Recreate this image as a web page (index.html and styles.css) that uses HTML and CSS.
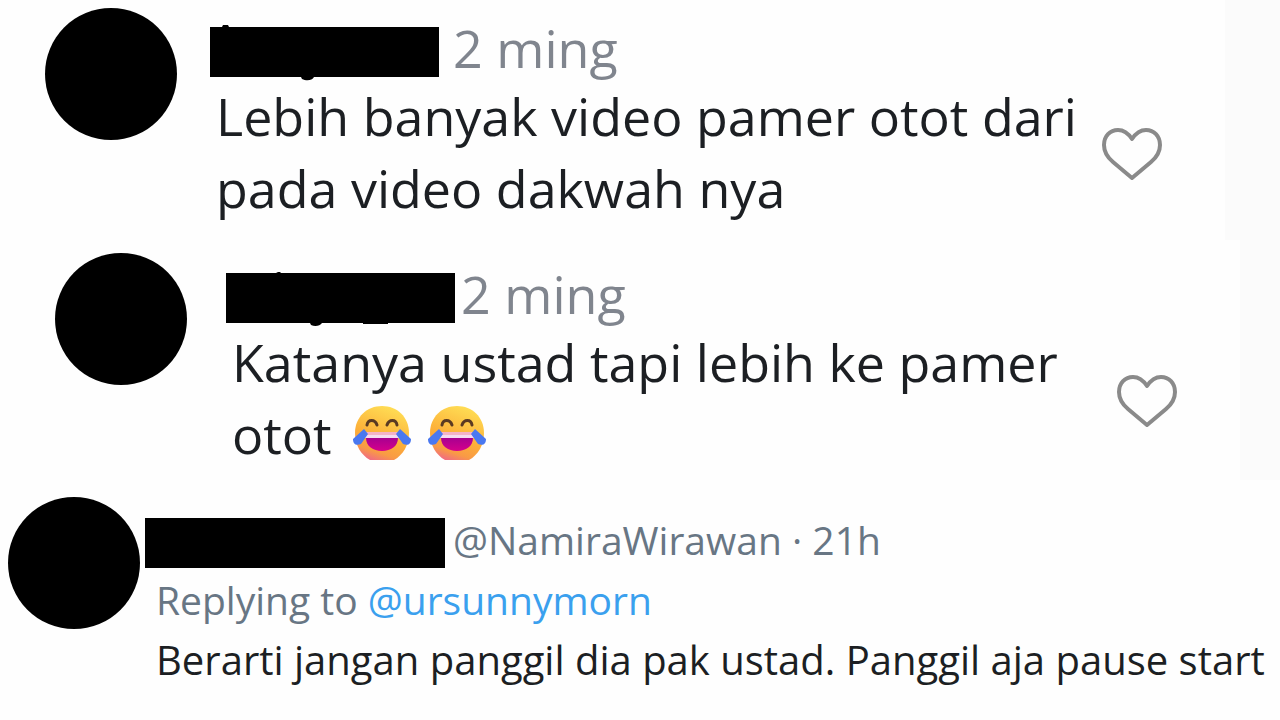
FILE: index.html
```
<!DOCTYPE html>
<html lang="id">
<head>
    <meta charset="UTF-8">
    <meta name="viewport" content="width=device-width, initial-scale=1.0">
    <title>Komentar</title>
    <link rel="stylesheet" href="styles.css">
</head>
<body>
    <!-- shared icons -->
    <svg class="sprite" aria-hidden="true">
        <defs>
            <linearGradient id="face" x1="0.7" y1="0" x2="0.35" y2="1">
                <stop offset="0" stop-color="#ffdf55"/>
                <stop offset="0.6" stop-color="#fcae38"/>
                <stop offset="0.85" stop-color="#f99a45"/>
                <stop offset="1" stop-color="#f2707c"/>
            </linearGradient>
            <linearGradient id="mouth" x1="0" y1="0" x2="0" y2="1">
                <stop offset="0" stop-color="#a80090"/>
                <stop offset="1" stop-color="#d5008c"/>
            </linearGradient>
            <symbol id="heart" viewBox="0 0 60 54">
                <path d="M30 12 C26 6 22 3 16 3 C8 3 2 9 2 18 C2 25 5 30 11 35 L30 51 L49 35 C55 30 58 25 58 18 C58 9 52 3 44 3 C38 3 34 6 30 12 Z" fill="none" stroke="#8a8a8a" stroke-width="4" stroke-linejoin="round"/>
            </symbol>
            <symbol id="joy" viewBox="0 0 58 54">
                <path d="M29 0 C14 0 2 11 2 27 C2 39 8 49 17 54 H41 C50 49 56 39 56 27 C56 11 44 0 29 0 Z" fill="url(#face)"/>
                <path d="M14 19 C15 13 22 13 24 19 M34 19 C36 13 43 13 44 19" fill="none" stroke="#5b3a22" stroke-width="3" stroke-linecap="round"/>
                <path d="M12 26 H46 V32 H12 Z" fill="#f3b3c8"/>
                <path d="M12 29 H46 V32 H12 Z" fill="#f6dcf2"/>
                <path d="M13 32 H45 C45 40 38 45 29 45 C20 45 13 40 13 32 Z" fill="url(#mouth)"/>
                <path d="M11 23 L15 28 L8 38 C3 40 0 38 0 33 Z M47 23 L43 28 L50 38 C55 40 58 38 58 33 Z" fill="#4a78f0"/>
            </symbol>
        </defs>
    </svg>

    <main class="feed">
        <article class="comment">
            <div class="avatar"></div>
            <div class="body">
                <div class="meta">
                    <svg class="name" viewBox="0 0 229 58" aria-hidden="true">
                        <path d="M0 4 H229 V54 H0 Z M12 4 L13 2 H18 L19 4 Z M91 54 H104 C102 58 96 58 92 56 Z"/>
                    </svg>
                    <span class="time">2 ming</span>
                </div>
                <p class="text">Lebih banyak video pamer otot dari<br>pada video dakwah nya</p>
            </div>
            <button class="like" type="button" aria-label="Suka"><svg><use href="#heart"/></svg></button>
            <div class="edge"></div>
        </article>

        <article class="comment comment-second">
            <div class="avatar"></div>
            <div class="body">
                <div class="meta">
                    <svg class="name" viewBox="0 0 229 58" aria-hidden="true">
                        <path d="M0 4 H229 V54 H0 Z M50 4 L52 3 H54 L55 4 Z M84 54 H96 C94 57 89 58 85 56 Z M137 54 H162 V55 H137 Z"/>
                    </svg>
                    <span class="time">2 ming</span>
                </div>
                <p class="text">Katanya ustad tapi lebih ke pamer<br>otot <span class="emojis"><svg role="img" aria-label="tertawa"><use href="#joy"/></svg><svg role="img" aria-label="tertawa"><use href="#joy"/></svg></span></p>
            </div>
            <button class="like" type="button" aria-label="Suka"><svg><use href="#heart"/></svg></button>
            <div class="edge"></div>
        </article>

        <article class="tweet">
            <div class="avatar"></div>
            <div class="body">
                <div class="meta">
                    <span class="name"></span>
                    <span class="time">@NamiraWirawan · 21h</span>
                </div>
                <p class="reply">Replying to <a href="#">@ursunnymorn</a></p>
                <p class="text">Berarti jangan panggil dia pak ustad. Panggil aja pause start</p>
            </div>
        </article>
    </main>
</body>
</html>
```
FILE: styles.css
```
:root {
    --ink: #1c1f23;
    --comment-gray: #80858e;
    --tweet-gray: #687684;
    --link-blue: #3aa0ee;
}

* {
    margin: 0;
    padding: 0;
    box-sizing: border-box;
}

body {
    background-color: #fefefe;
    color: var(--ink);
    overflow-x: hidden;
}

.sprite {
    display: block;
    width: 0;
    height: 0;
}

.comment,
.tweet {
    display: flex;
    align-items: flex-start;
    min-height: 240px;
    white-space: nowrap;
}

.avatar {
    flex: none;
    width: 132px;
    height: 132px;
    border-radius: 50%;
    background-color: #000;
}

.body {
    flex: 1;
    min-width: 0;
}

.meta {
    display: flex;
}

/* comments */
.comment {
    padding: 8px 0 0 45px;
    font-family: "Open Sans", "Noto Sans", sans-serif;
    font-size: 52px;
    line-height: 72px;
}

.comment .body {
    padding: 8px 0 0 33px;
}

.comment .meta {
    align-items: flex-end;
    gap: 14px;
    line-height: 64px;
    color: var(--comment-gray);
}

.comment .name {
    width: 229px;
    height: 58px;
    margin-bottom: -1px;
}

.comment .text {
    padding-left: 6px;
}

.like {
    flex: none;
    width: 60px;
    height: 54px;
    margin: 119px 63px 0 0;
    border: none;
    background: none;
    cursor: pointer;
}

.like svg {
    display: block;
    width: 60px;
    height: 54px;
}

.edge {
    flex: none;
    align-self: stretch;
    width: 55px;
    margin-top: -8px;
    background-color: #fbfbfb;
}

.comment-second {
    padding: 13px 0 0 55px;
}

.comment-second .body {
    padding: 9px 0 0 39px;
}

.comment-second .meta {
    gap: 6px;
}

.comment-second .like {
    margin-top: 121px;
}

.comment-second .edge {
    width: 40px;
    margin-top: -13px;
}

.emojis {
    display: inline-flex;
    gap: 17px;
    margin-left: 8px;
    vertical-align: -6px;
}

.emojis svg {
    width: 58px;
    height: 54px;
}

/* tweet */
.tweet {
    padding: 17px 0 0 8px;
    font-family: "Open Sans", "Noto Sans", sans-serif;
    font-size: 40px;
    line-height: 60px;
}

.tweet .body {
    padding: 13px 0 0 5px;
}

.tweet .meta {
    align-items: flex-end;
    gap: 8px;
    font-size: 39px;
    color: var(--tweet-gray);
}

.tweet .name {
    width: 300px;
    height: 50px;
    margin-bottom: 2px;
    background-color: #000;
}

.reply,
.tweet .text {
    padding-left: 11px;
}

.reply {
    font-size: 39px;
    color: var(--tweet-gray);
}

.reply a {
    color: var(--link-blue);
    text-decoration: none;
}
```
